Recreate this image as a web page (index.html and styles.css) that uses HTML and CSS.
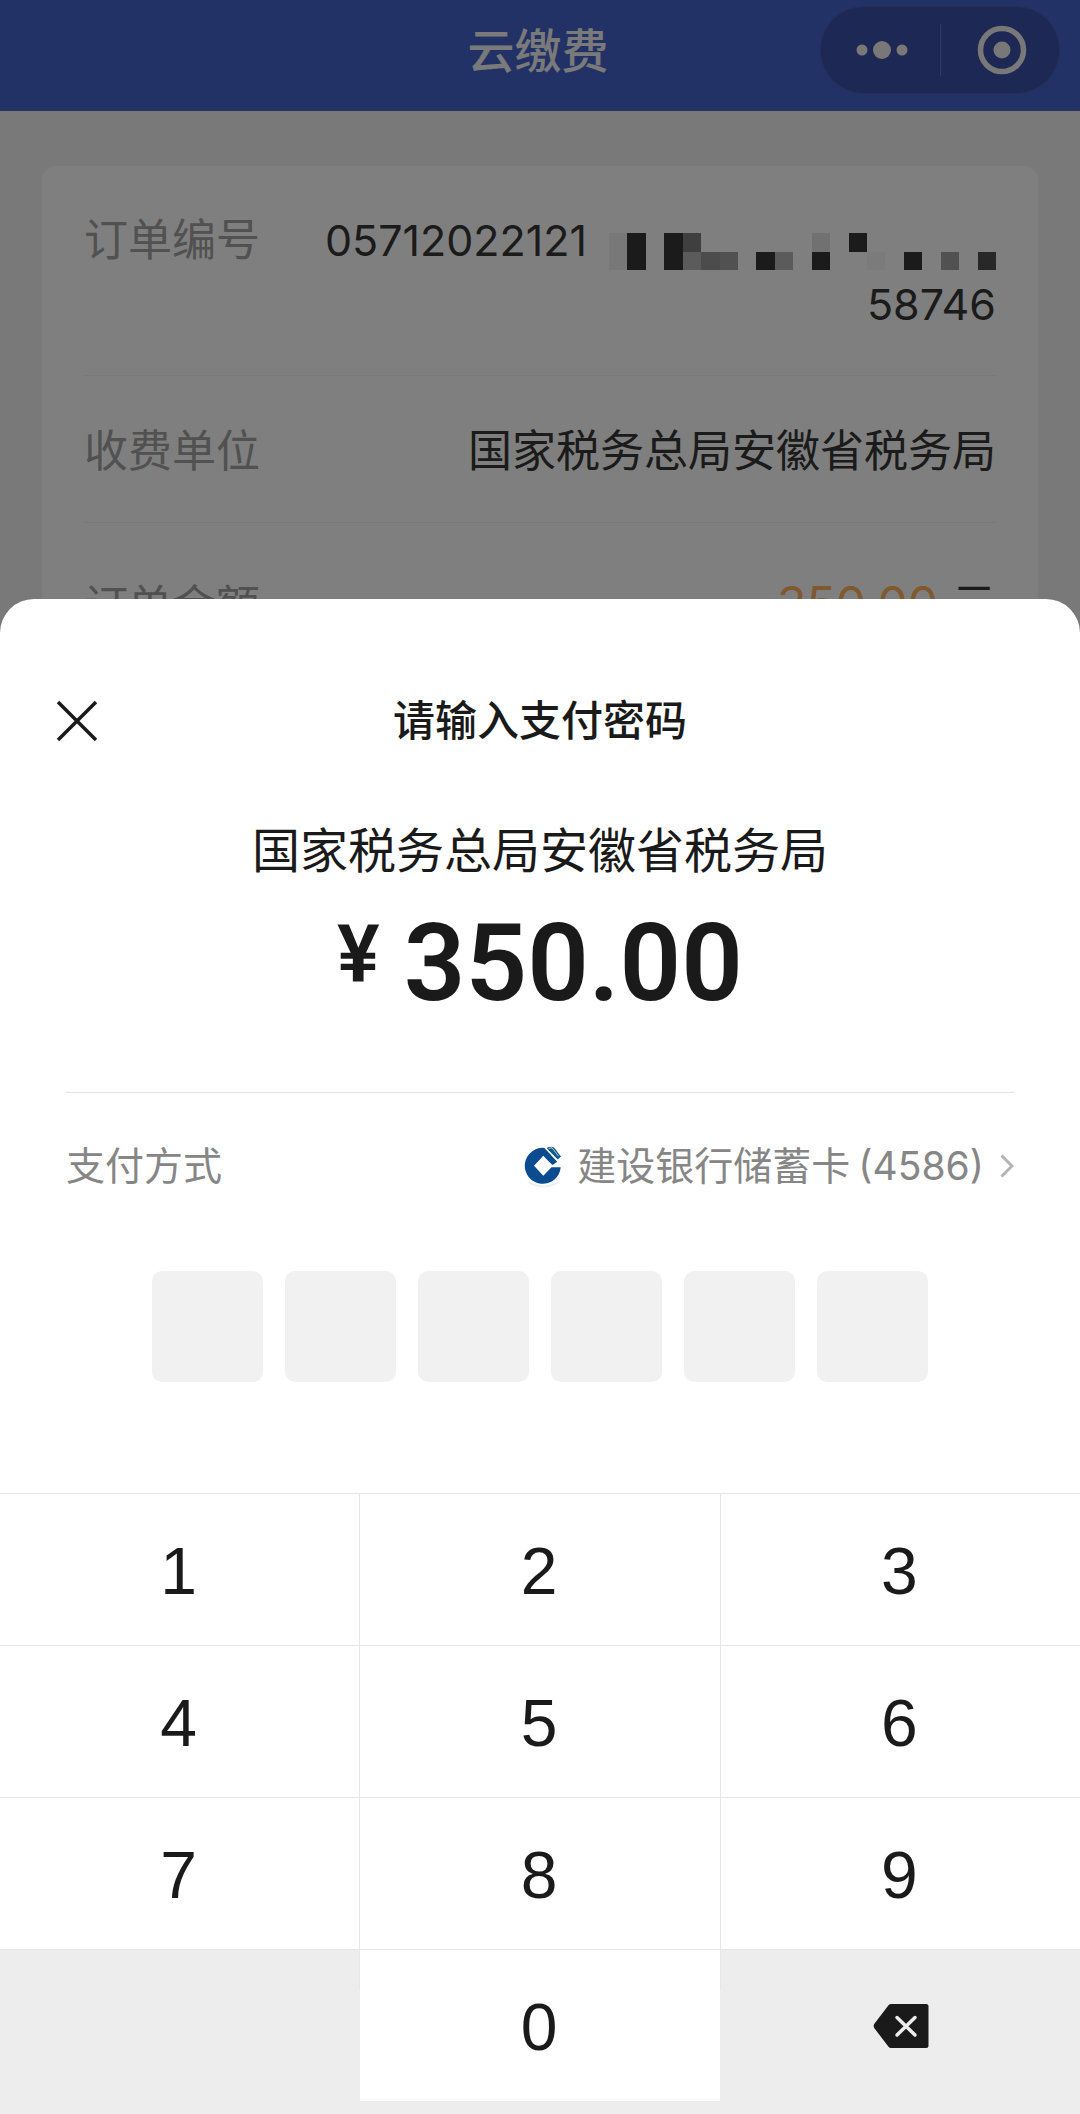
FILE: index.html
```html
<!DOCTYPE html>
<html lang="zh-CN">
<head>
<meta charset="utf-8">
<meta name="viewport" content="width=device-width, initial-scale=1">
<title>云缴费</title>
<link rel="stylesheet" href="styles.css">
</head>
<body>
<div class="page">
  <header class="navbar">
    <h1 class="navbar-title">云缴费</h1>
    <div class="capsule">
      <button class="capsule-button" type="button" aria-label="更多">
        <svg width="52" height="24" viewBox="0 0 52 24" fill="currentColor"><circle cx="6" cy="12" r="5.5"/><circle cx="26" cy="12" r="9"/><circle cx="46" cy="12" r="5.5"/></svg>
      </button>
      <span class="capsule-line"></span>
      <button class="capsule-button" type="button" aria-label="关闭小程序">
        <svg width="50" height="50" viewBox="0 0 50 50"><circle cx="25" cy="25" r="21.5" fill="none" stroke="currentColor" stroke-width="5.5"/><circle cx="25" cy="25" r="8.5" fill="currentColor"/></svg>
      </button>
    </div>
  </header>
  <main class="card">
    <dl class="details">
      <div class="detail">
        <dt>订单编号</dt>
        <dd class="order-number">
          <span class="order-start">05712022121<svg class="mask" width="387" height="37" viewBox="0 0 21 2" preserveAspectRatio="none" shape-rendering="crispEdges" aria-hidden="true">
            <path fill="#363636" d="M1 0h1v2h-1zM3 0h1v2h-1zM8 1h1v1h-1zM11 1h1v1h-1zM13 0h1v1h-1zM16 1h1v1h-1z"/>
            <path fill="#505050" d="M20 1h1v1h-1z"/>
            <path fill="#7e7e7e" d="M4 0h1v1h-1z"/>
            <path fill="#989898" d="M5 1h1v1h-1z"/>
            <path fill="#a2a2a2" d="M6 1h1v1h-1zM18 1h1v1h-1z"/>
            <path fill="#b6b6b6" d="M4 1h1v1h-1zM9 1h1v1h-1z"/>
            <path fill="#e2e2e2" d="M11 0h1v1h-1z"/>
            <path fill="#f0f0f0" d="M0 0h1v2h-1z"/>
            <path fill="#f6f6f6" d="M14 1h1v1h-1z"/>
          </svg></span>
          <span>58746</span>
        </dd>
      </div>
      <div class="detail">
        <dt>收费单位</dt>
        <dd>国家税务总局安徽省税务局</dd>
      </div>
      <div class="detail detail-total">
        <dt>订单金额</dt>
        <dd><span class="total">350.00</span>元</dd>
      </div>
    </dl>
  </main>
</div>

<div class="overlay">
  <section class="sheet" role="dialog" aria-modal="true" aria-labelledby="sheet-title">
    <header class="sheet-header">
      <button class="close" type="button" aria-label="关闭">
        <svg width="42" height="42" viewBox="0 0 42 42" fill="none" stroke="currentColor" stroke-width="3.5"><path d="M2 2l38 38M40 2L2 40"/></svg>
      </button>
      <h2 class="sheet-title" id="sheet-title">请输入支付密码</h2>
    </header>
    <p class="merchant">国家税务总局安徽省税务局</p>
    <p class="amount"><span class="currency">¥</span><span>350.00</span></p>
    <div class="method">
      <span>支付方式</span>
      <button class="bank" type="button">
        <svg class="bank-logo" width="40" height="44" viewBox="0 0 40 44">
          <path d="M4 38q15.500 9 31 0" fill="none" stroke="#ededed" stroke-width="1.5"/>
          <path d="M21.500 4A18 18 0 1 0 36.700 23.300H27.500L19.300 31.700L10 21.700L19.300 11.700L25 17.700L28.500 21L33.500 17.500Z" fill="#0b4c91"/>
          <path d="M22.300 4.200Q26.500 1.600 30 3.600L37 12.500L33.800 15.500Z" fill="#0f5c86"/>
          <path d="M24.500 4.500L28 3.700L34.500 12" fill="none" stroke="#fff" stroke-width=".7"/>
          <path d="M20.500 3L34 17.500" stroke="#fff" stroke-width="1.4"/>
        </svg>
        <span>建设银行储蓄卡<span class="card-tail">(4586)</span></span>
        <svg class="chevron" width="14" height="24" viewBox="0 0 14 24" fill="none" stroke="#b4b4b4" stroke-width="3"><path d="M1.500 1.500l10.500 10.500L1.500 22.500"/></svg>
      </button>
    </div>
    <form class="pin">
      <input type="password" maxlength="1" inputmode="numeric" aria-label="密码第1位">
      <input type="password" maxlength="1" inputmode="numeric" aria-label="密码第2位">
      <input type="password" maxlength="1" inputmode="numeric" aria-label="密码第3位">
      <input type="password" maxlength="1" inputmode="numeric" aria-label="密码第4位">
      <input type="password" maxlength="1" inputmode="numeric" aria-label="密码第5位">
      <input type="password" maxlength="1" inputmode="numeric" aria-label="密码第6位">
    </form>
    <div class="keypad">
      <button class="key" type="button">1</button>
      <button class="key" type="button">2</button>
      <button class="key" type="button">3</button>
      <button class="key" type="button">4</button>
      <button class="key" type="button">5</button>
      <button class="key" type="button">6</button>
      <button class="key" type="button">7</button>
      <button class="key" type="button">8</button>
      <button class="key" type="button">9</button>
      <span class="key key-blank"></span>
      <button class="key" type="button">0</button>
      <button class="key key-blank" type="button" aria-label="删除">
        <svg width="56" height="44" viewBox="0 0 56 44"><path d="M18 0H53Q55.500 0 55.500 2.500V41.500Q55.500 44 53 44H18Q16.500 44 15.500 42.800L1.200 24Q0 22 1.200 20L15.500 1.200Q16.500 0 18 0Z" fill="#1a1a1a"/><path d="M24 13.500L42 31M42 13.500L24 31" stroke="#ededed" stroke-width="3.500" stroke-linecap="round"/></svg>
      </button>
    </div>
  </section>
</div>
</body>
</html>
```
FILE: styles.css
```css
* {
  box-sizing: border-box;
}

body {
  margin: 0;
  font-family: Inter, "Noto Sans CJK SC", sans-serif;
  font-size: 44px;
  color: #363636;
}

h1, h2, p, dl, dd {
  margin: 0;
}

button {
  padding: 0;
  border: 0;
  background: none;
  color: inherit;
  font: inherit;
}

svg {
  display: block;
}

.page {
  height: 100vh;
  overflow: hidden;
  background: #f2f2f2;
}

/* Mini-program title bar */
.navbar {
  display: grid;
  grid-template-columns: 1fr auto 1fr;
  align-items: center;
  padding: 6px 20px 16px 16px;
  border-bottom: 1px solid #5868a8;
  background: #4462cc;
}

.navbar-title {
  grid-column: 2;
  padding-top: 2px;
  font-size: 47px;
  line-height: 64px;
  font-weight: 500;
  color: #f4f4f4;
}

.capsule {
  display: flex;
  justify-self: end;
  align-items: center;
  width: 240px;
  height: 88px;
  border: 1px solid #485cb0;
  border-radius: 44px;
  background: #3c50aa;
  color: #f0f0f0;
}

.capsule-button {
  flex: 1;
  display: flex;
  justify-content: center;
  padding-left: 4px;
}

.capsule-line {
  width: 1px;
  height: 52px;
  background: #6070b8;
}

/* Order details */
.card {
  margin: 55px 42px 0;
  padding: 9px 42px;
  border-radius: 14px;
  background: #fff;
}

.detail {
  display: flex;
  justify-content: space-between;
  padding: 43px 0 39px;
  border-bottom: 1px solid #f0f0f0;
  line-height: 64px;
}

.detail dt {
  color: #a2a2a2;
}

.detail:first-child {
  padding-top: 33px;
}

.detail-total {
  padding-top: 51px;
}

.detail-total dd {
  line-height: 60px;
}

.order-number {
  display: flex;
  flex-direction: column;
  align-items: flex-end;
  font-size: 43px;
}

.order-start {
  display: flex;
  align-items: center;
  gap: 22px;
}

.mask {
  margin-top: 22px;
}

.total {
  margin-right: 14px;
  font-size: 48px;
  color: #ffb45c;
}

/* Payment sheet over the dimmed page */
.overlay {
  position: fixed;
  inset: 0;
  display: flex;
  flex-direction: column;
  justify-content: flex-end;
  background: rgba(0, 0, 0, 0.5);
}

.sheet {
  padding-top: 92px;
  border-radius: 34px 34px 0 0;
  background: #fff;
  color: #1a1a1a;
  overflow: hidden;
}

.sheet-header {
  display: grid;
  grid-template-columns: 1fr auto 1fr;
  align-items: center;
  padding: 0 56px;
}

.close {
  justify-self: start;
}

.sheet-title {
  font-size: 42px;
  font-weight: 500;
  line-height: 60px;
}

.merchant {
  margin-top: 68px;
  font-size: 48px;
  line-height: 64px;
  text-align: center;
}

.amount {
  display: flex;
  justify-content: center;
  align-items: flex-start;
  gap: 24px;
  margin-top: 24px;
  font-family: Roboto, sans-serif;
  font-size: 108px;
  font-weight: 600;
  line-height: 112px;
}

.currency {
  font-size: 80px;
  line-height: 94px;
}

.method {
  display: flex;
  justify-content: space-between;
  align-items: center;
  margin: 73px 66px 0;
  padding-top: 43px;
  border-top: 1px solid #e2e2e2;
  font-size: 39px;
  line-height: 60px;
  color: #868686;
}

.bank {
  display: flex;
  align-items: center;
}

.bank-logo {
  margin-right: 13px;
}

.card-tail {
  margin-left: 8px;
}

.chevron {
  margin-left: 16px;
}

.pin {
  display: flex;
  justify-content: center;
  gap: 22px;
  margin: 75px 0 111px;
}

.pin input {
  width: 111px;
  height: 111px;
  padding: 0;
  border: 0;
  border-radius: 10px;
  background: #f1f1f1;
  font-size: 48px;
  text-align: center;
}

.keypad {
  display: grid;
  grid-template-columns: repeat(3, 1fr);
  gap: 1px;
  padding: 1px 0 13px;
  background: linear-gradient(#e6e6e6, #e6e6e6 80%, #ededed 80%);
}

.key {
  display: flex;
  align-items: center;
  justify-content: center;
  height: 151px;
  padding: 3px 2px 0 0;
  background: #fff;
  font-family: "Liberation Sans", sans-serif;
  font-size: 66px;
}

.key-blank {
  padding: 0 0 0 2px;
  background: #ededed;
}
```
